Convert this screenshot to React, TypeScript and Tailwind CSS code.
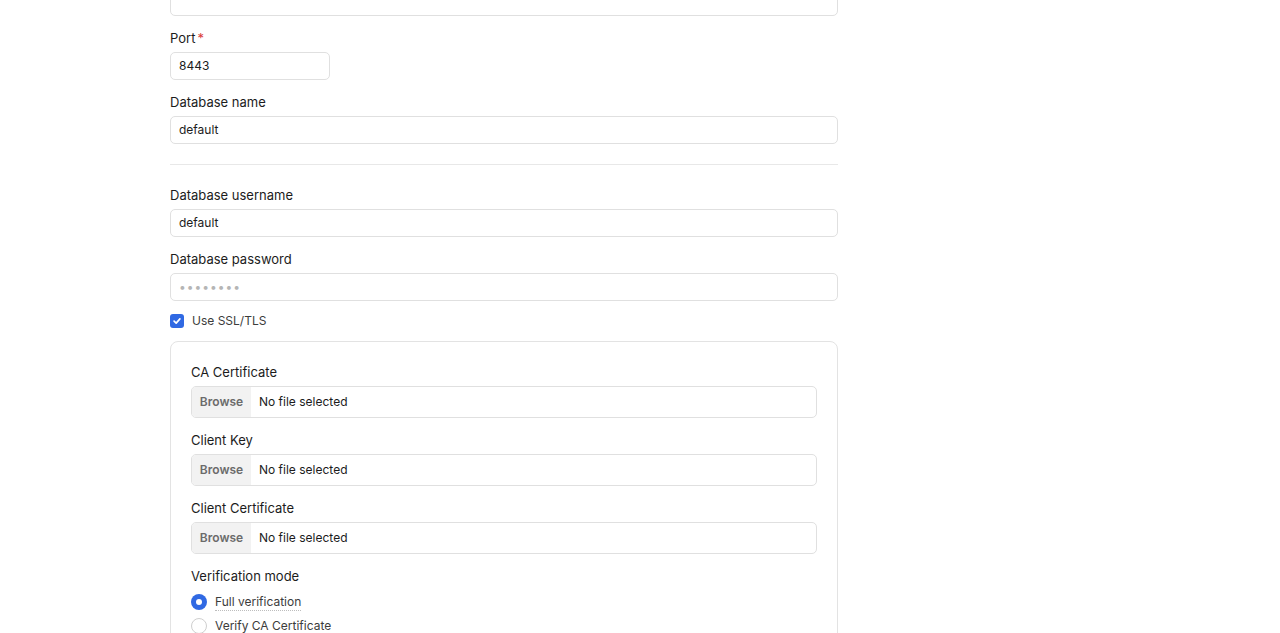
import { type ReactNode } from 'react';

const font = { fontFamily: 'Inter, "Noto Sans", sans-serif' };

function Label({ children, required }: { children: ReactNode; required?: boolean }) {
  return (
    <div className="flex h-5 items-center text-[13px] leading-5 text-[#1c1c1c]">
      {children}
      {required && <span className="ml-[2px] text-[#d93a3a]">*</span>}
    </div>
  );
}

function TextBox({ value, wide = true, password }: { value: string; wide?: boolean; password?: boolean }) {
  return (
    <div
      className={`mt-1 flex h-7 items-center rounded-[5px] border border-[#e0e0e0] bg-white px-2 text-[12px] ${
        wide ? 'w-full' : 'w-40'
      } ${password ? 'tracking-[1px] text-[#b5b5b5]' : 'text-[#1c1c1c]'}`}
    >
      {value}
    </div>
  );
}

function FileBox() {
  return (
    <div className="mt-1 flex h-8 w-full overflow-hidden rounded-[5px] border border-[#e0e0e0] bg-white text-[12px]">
      <span className="flex w-[59px] items-center justify-center bg-[#f2f2f2] font-semibold text-[#6b6b6b]">Browse</span>
      <span className="flex items-center pl-[8px] text-[#1c1c1c]">No file selected</span>
    </div>
  );
}

function Radio({ label, checked, hint }: { label: string; checked?: boolean; hint?: boolean }) {
  return (
    <div className="flex h-4 items-center gap-2 text-[12px] text-[#3c3c3c]">
      {checked ? (
        <span className="flex h-4 w-4 items-center justify-center rounded-full bg-[#3069e3]">
          <span className="h-[6px] w-[6px] rounded-full bg-white" />
        </span>
      ) : (
        <span className="h-4 w-4 rounded-full border border-[#cfcfcf] bg-white" />
      )}
      <span className={hint ? 'border-b border-dotted border-[#bdbdbd] leading-4' : 'leading-4'}>{label}</span>
    </div>
  );
}

export default function App() {
  return (
    <div className="min-h-screen bg-white" style={font}>
      <div className="ml-[170px] w-[668px]">
        <div className="mt-[-12px] h-7 w-full rounded-[5px] border border-[#e0e0e0]" />

        <div className="mt-3">
          <Label required>Port</Label>
          <TextBox value="8443" wide={false} />
        </div>
        <div className="mt-3">
          <Label>Database name</Label>
          <TextBox value="default" />
        </div>

        <div className="mt-5 h-px bg-[#e8e8e8]" />

        <div className="mt-5">
          <Label>Database username</Label>
          <TextBox value="default" />
        </div>
        <div className="mt-3">
          <Label>Database password</Label>
          <TextBox value="••••••••" password />
        </div>

        <div className="mt-3 flex h-4 items-center gap-2 text-[12px] text-[#3c3c3c]">
          <span className="flex h-[14px] w-[14px] items-center justify-center rounded-[3px] bg-[#3069e3]">
            <svg viewBox="0 0 12 12" className="h-[10px] w-[10px]" fill="none" stroke="white" strokeWidth="2" strokeLinecap="round" strokeLinejoin="round">
              <path d="M2.5 6.2 5 8.5 9.5 3.5" />
            </svg>
          </span>
          <span>Use SSL/TLS</span>
        </div>

        <div className="mt-3 rounded-[8px] border border-[#e3e3e3] px-5 pb-8 pt-5">
          <Label>CA Certificate</Label>
          <FileBox />
          <div className="mt-3">
            <Label>Client Key</Label>
            <FileBox />
          </div>
          <div className="mt-3">
            <Label>Client Certificate</Label>
            <FileBox />
          </div>
          <div className="mt-3">
            <Label>Verification mode</Label>
            <div className="mt-2 flex flex-col gap-2">
              <Radio label="Full verification" checked hint />
              <Radio label="Verify CA Certificate" />
              <Radio label="Skip verification" />
            </div>
          </div>
        </div>
      </div>
    </div>
  );
}
